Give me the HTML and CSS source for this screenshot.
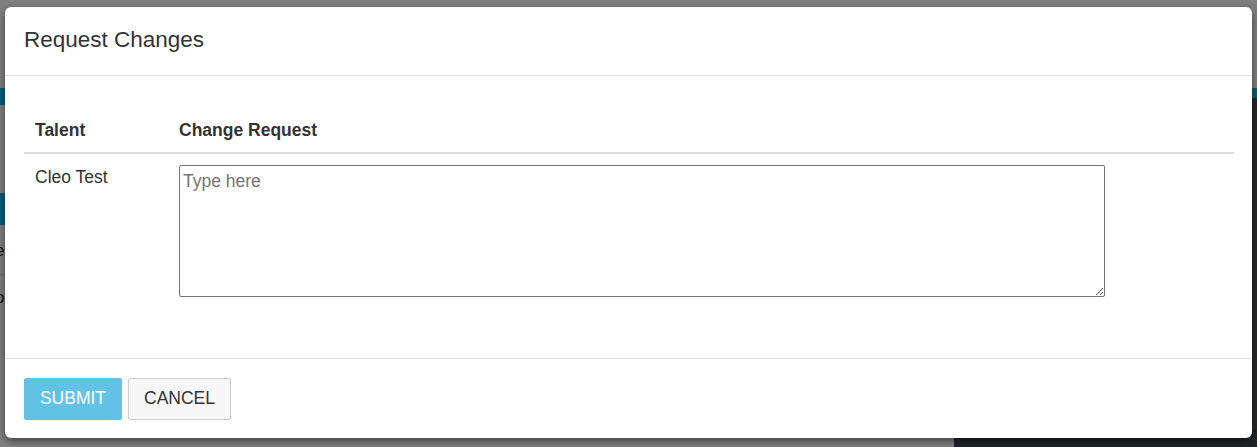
FILE: index.html
```html
<!DOCTYPE html>
<html>
<head>
<meta charset="utf-8">
<link rel="stylesheet" href="styles.css">
<title>Request Changes</title>
</head>
<body>
<div class="page">
  <div class="bar-left"></div>
  <div class="bar-left2"></div>
  <div class="clip clip-e"><span class="frag">e</span></div>
  <div class="line-left"></div>
  <div class="clip clip-o"><span class="frag">o</span></div>
  <div class="bar-right"></div>
  <div class="dark-right"></div>
  <div class="dark-bottom"></div>
</div>
<div class="modal">
  <div class="modal-header">
    <h4 class="modal-title">Request Changes</h4>
  </div>
  <div class="modal-body">
    <table class="table">
      <thead>
        <tr><th class="col-talent">Talent</th><th>Change Request</th></tr>
      </thead>
      <tbody>
        <tr>
          <td class="col-talent">Cleo Test</td>
          <td><textarea class="request" placeholder="Type here"></textarea></td>
        </tr>
      </tbody>
    </table>
  </div>
  <div class="modal-footer">
    <button class="btn btn-submit">SUBMIT</button>
    <button class="btn btn-cancel">CANCEL</button>
  </div>
</div>
</body>
</html>
```
FILE: styles.css
```css
html, body {
  margin: 0;
  padding: 0;
  width: 1257px;
  height: 447px;
  overflow: hidden;
}
body {
  background: #808080;
  font-family: "Liberation Sans", Arial, sans-serif;
  color: #333;
  position: relative;
}
.page {
  position: absolute;
  inset: 0;
}
.bar-left {
  position: absolute;
  left: 0; top: 88px; width: 40px; height: 17px;
  background: #0c5b76;
}
.bar-left2 {
  position: absolute;
  left: 0; top: 193px; width: 40px; height: 32px;
  background: #0c5b76;
}
.clip {
  position: absolute;
  left: 0;
  width: 5px;
  height: 20px;
  overflow: hidden;
}
.clip-e { top: 241px; }
.clip-o { top: 288px; }
.frag {
  display: block;
  margin-left: -5px;
  font-size: 17px;
  line-height: 20px;
  color: #111;
}
.line-left {
  position: absolute;
  left: 0; top: 274px; width: 40px; height: 1px;
  background: #6f6f6f;
}
.bar-right {
  position: absolute;
  right: 0; top: 88px; width: 40px; height: 10px;
  background: #0c5b76;
}
.dark-right {
  position: absolute;
  right: 0; top: 98px; width: 40px; height: 349px;
  background: #25272b;
}
.dark-bottom {
  position: absolute;
  left: 954px; top: 430px; right: 0; height: 17px;
  background: #222327;
}
.modal {
  position: absolute;
  left: 5px;
  top: 7px;
  width: 1247px;
  height: 431px;
  background: #fff;
  border-radius: 6px;
  box-shadow: 0 3px 9px rgba(0,0,0,0.5);
  display: flex;
  flex-direction: column;
}
.modal-header {
  height: 69px;
  box-sizing: border-box;
  border-bottom: 1px solid #e5e5e5;
  padding: 0 19px;
  display: flex;
  align-items: center;
}
.modal-title {
  margin: 0;
  font-size: 22.5px;
  font-weight: normal;
  color: #333;
  position: relative;
  top: -1px;
}
.modal-body {
  flex: 1;
  padding: 30px 18px 0 19px;
}
.table {
  width: 100%;
  border-collapse: collapse;
  font-size: 17.5px;
}
.table th {
  text-align: left;
  font-weight: bold;
  padding: 14px 11px 12px;
  border-bottom: 2px solid #ddd;
  line-height: 20px;
}
.table td {
  vertical-align: top;
  padding: 11px 11px 0;
  line-height: 24px;
}
.col-talent {
  width: 122px;
}
.request {
  display: block;
  width: 926px;
  height: 132px;
  box-sizing: border-box;
  margin: 0;
  border: 1px solid #767676;
  border-radius: 2px;
  padding: 3px 3px;
  font-family: "Liberation Sans", Arial, sans-serif;
  font-size: 17.5px;
  line-height: 24px;
  color: #333;
  resize: both;
}
.request::placeholder {
  color: #757575;
}
.modal-footer {
  height: 80px;
  box-sizing: border-box;
  border-top: 1px solid #e5e5e5;
  padding: 19px 19px;
  display: flex;
  gap: 6px;
  align-items: flex-start;
}
.btn {
  height: 42px;
  box-sizing: border-box;
  font-family: "Liberation Sans", Arial, sans-serif;
  font-size: 17.5px;
  border-radius: 2px;
  padding: 0 12px 2px;
}
.btn-submit {
  width: 98px;
  background: #62c2e6;
  color: #fff;
  border: 1px solid #62c2e6;
}
.btn-cancel {
  width: 103px;
  background: #f7f7f7;
  color: #333;
  border: 1px solid #ccc;
}
```
